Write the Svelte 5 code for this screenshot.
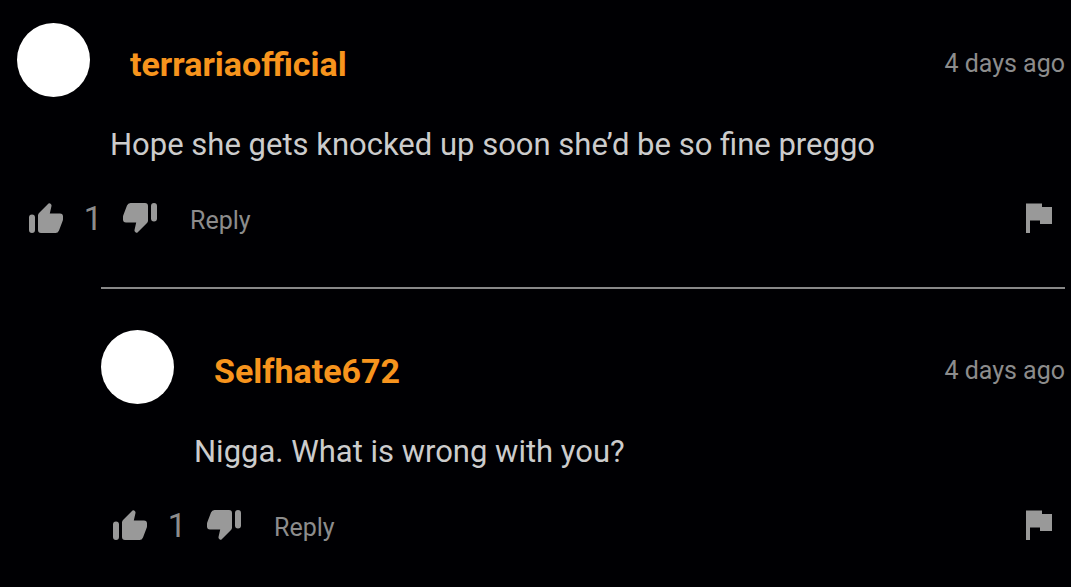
<script>
    let comments = [
        { id: 1, user: "terrariaofficial", time: "4 days ago", text: "Hope she gets knocked up soon she’d be so fine preggo", likes: 1, nested: false },
        { id: 2, user: "Selfhate672", time: "4 days ago", text: "Nigga. What is wrong with you?", likes: 1, nested: true }
    ];

    const thumb = "M1 15.500Q1 12.500 4 12.500T7 15.500V28Q7 31 4 31T1 28ZM10 13.500Q10 12 11 11L20.500 1.500Q21.300 .8 22.200 1.500L23 2.300Q23.700 3 23.500 4L21.800 11.500H32Q35 11.500 35 14.500V17Q35 18 34.700 18.800L31 28.500Q30 31 27.500 31H13Q10 31 10 28Z";
</script>

<main>
{#each comments as comment (comment.id)}
    <article class:nested={comment.nested}>
        <header>
            <span class="avatar"></span>
            <a class="user" href="#user">{comment.user}</a>
            <time>{comment.time}</time>
        </header>
        <p>{comment.text}</p>
        <footer>
            <button class="icon" aria-label="Like">
                <svg width="36" height="32" viewBox="0 0 36 32"><path d={thumb} /></svg>
            </button>
            <span class="count">{comment.likes}</span>
            <button class="icon" aria-label="Dislike">
                <svg class="down" width="36" height="32" viewBox="0 0 36 32"><path d={thumb} /></svg>
            </button>
            <button class="reply">Reply</button>
            <button class="icon flag" aria-label="Report">
                <svg width="28" height="32" viewBox="0 0 28 32"><path d="M1 1.500H17V5H27V22H15V18.500H5V31H1Z" /></svg>
            </button>
        </footer>
    </article>
{/each}
</main>

<style>
    :global(body) {
        background-color: #000003;
    }

    main {
        padding: 0 6px 0 17px;
        font-family: Roboto, sans-serif;
        color: #ccc;
    }

    article {
        padding: 23px 0 48px;
    }

    .nested {
        margin-left: 84px;
        border-top: 2px solid #888;
        padding-top: 41px;
    }

    header {
        display: flex;
        align-items: center;
        height: 74px;
    }

    .avatar {
        width: 73px;
        height: 74px;
        border-radius: 50%;
        background-color: white;
    }

    .user {
        margin: 8px 0 0 40px;
        font-size: 34px;
        font-weight: 700;
        line-height: 40px;
        color: #f7941d;
        text-decoration: none;
    }

    time {
        margin: 8px 0 0 auto;
        font-size: 25px;
        line-height: 32px;
        color: #8c8c8c;
    }

    p {
        margin: 28px 0 0 93px;
        font-size: 31px;
        line-height: 40px;
    }

    footer {
        display: flex;
        align-items: center;
        height: 40px;
        margin-top: 34px;
        padding: 0 12px 0 11px;
        color: #8c8c8c;
    }

    button {
        border: none;
        background: none;
        padding: 0;
        color: inherit;
        font-family: inherit;
        cursor: pointer;
    }

    .icon {
        margin-bottom: 3px;
    }

    svg {
        display: block;
        fill: #999;
    }

    .down {
        transform: rotate(180deg);
    }

    .count {
        width: 58px;
        text-align: center;
        font-size: 33px;
        line-height: 40px;
    }

    .reply {
        margin: 4px 0 0 32px;
        font-size: 25px;
        line-height: 32px;
    }

    .flag {
        margin-left: auto;
    }
</style>
